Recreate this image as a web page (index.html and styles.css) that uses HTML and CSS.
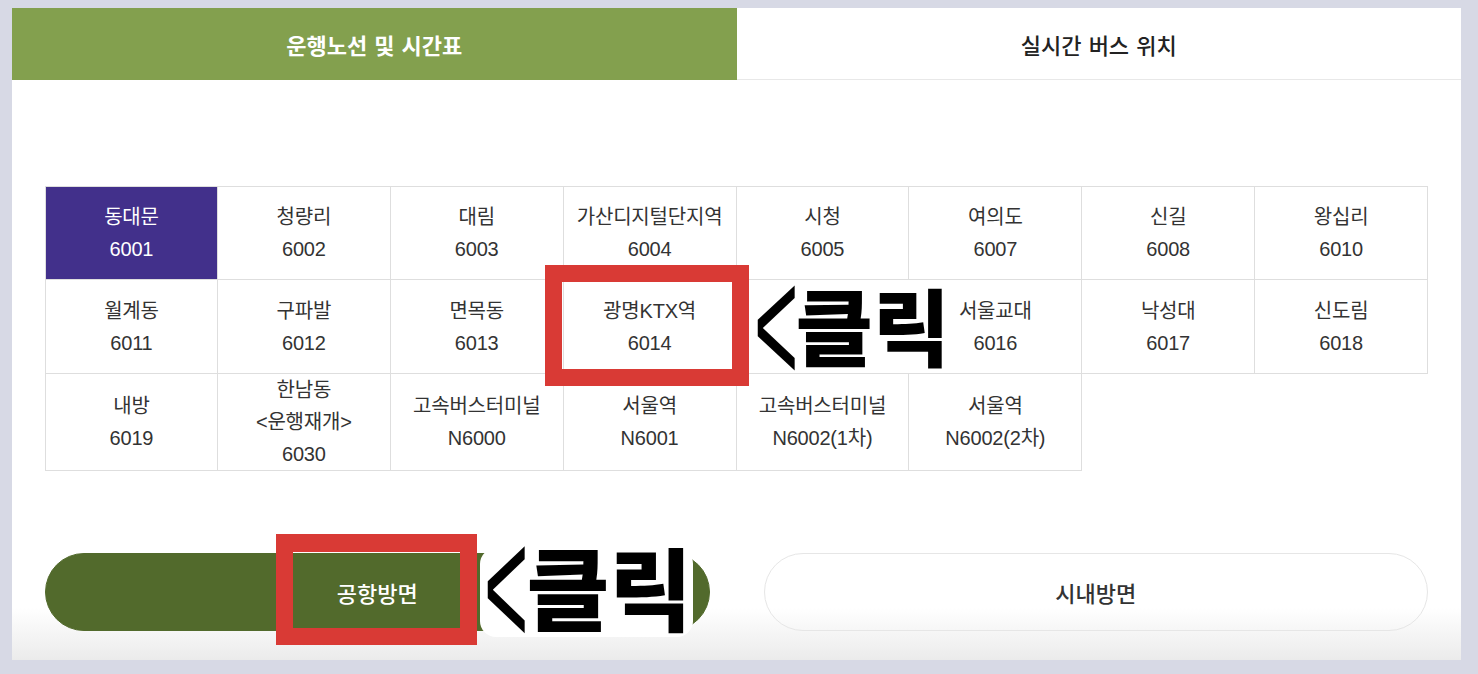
FILE: index.html
```html
<!DOCTYPE html>
<html lang="ko">
<head>
  <meta charset="UTF-8">
  <title>공항버스 운행노선 및 시간표</title>
  <meta name="viewport" content="width=device-width, initial-scale=1.0">
  <link rel="stylesheet" href="styles.css">
</head>
<body>
  <div class="panel">
    <div class="tabs">
      <a class="tab tab-on">운행노선 및 시간표</a>
      <a class="tab">실시간 버스 위치</a>
    </div>

    <div class="content">
      <ul class="routes">
        <li class="route route-on"><span>동대문</span><span>6001</span></li>
        <li class="route"><span>청량리</span><span>6002</span></li>
        <li class="route"><span>대림</span><span>6003</span></li>
        <li class="route"><span>가산디지털단지역</span><span>6004</span></li>
        <li class="route"><span>시청</span><span>6005</span></li>
        <li class="route"><span>여의도</span><span>6007</span></li>
        <li class="route"><span>신길</span><span>6008</span></li>
        <li class="route"><span>왕십리</span><span>6010</span></li>
        <li class="route"><span>월계동</span><span>6011</span></li>
        <li class="route"><span>구파발</span><span>6012</span></li>
        <li class="route"><span>면목동</span><span>6013</span></li>
        <li class="route"><span>광명KTX역</span><span>6014</span></li>
        <li class="route"></li>
        <li class="route"><span>서울교대</span><span>6016</span></li>
        <li class="route"><span>낙성대</span><span>6017</span></li>
        <li class="route"><span>신도림</span><span>6018</span></li>
        <li class="route"><span>내방</span><span>6019</span></li>
        <li class="route"><span>한남동</span><span>&lt;운행재개&gt;</span><span>6030</span></li>
        <li class="route"><span>고속버스터미널</span><span>N6000</span></li>
        <li class="route"><span>서울역</span><span>N6001</span></li>
        <li class="route"><span>고속버스터미널</span><span>N6002(1차)</span></li>
        <li class="route"><span>서울역</span><span>N6002(2차)</span></li>
      </ul>

      <div class="dirs">
        <button class="dir dir-on">공항방면</button>
        <button class="dir">시내방면</button>
      </div>
    </div>

    <!-- 캡처 위에 덧붙인 안내 표시 -->
    <div class="mark mark-route"></div>
    <div class="note note-route"><span class="arrow">&lt;</span><span>클릭</span></div>
    <div class="mark mark-dir"></div>
    <div class="note note-dir"><span class="arrow">&lt;</span><span>클릭</span></div>
  </div>
</body>
</html>
```

FILE: styles.css
```css
body {
  margin: 0;
  background: #d7d9e5;
  font-family: "Liberation Sans", "Noto Sans CJK KR", sans-serif;
  color: #333;
}
.panel {
  position: relative;
  margin: 8px 0 0 12px;
  width: 1449px;
  height: 652px;
  background: linear-gradient(to bottom, #fff 600px, #ebebeb 652px);
}
.tabs {
  display: flex;
  height: 72px;
}
.tab {
  flex: 1 1 0;
  display: flex;
  align-items: center;
  justify-content: center;
  font-size: 22px;
  font-weight: 500;
  word-spacing: 1px;
  color: #222;
  border-bottom: 1px solid #e8e8e8;
}
.tab-on {
  background: #83a04e;
  color: #fff;
  font-weight: 700;
  border-bottom-color: #83a04e;
}
.content {
  padding: 106px 33px 0;
}
.routes {
  list-style: none;
  margin: 0;
  padding: 0;
  display: grid;
  grid-template-columns: repeat(8, 1fr);
  grid-auto-rows: minmax(94px, auto);
}
.route {
  display: flex;
  flex-direction: column;
  align-items: center;
  justify-content: center;
  font-size: 20px;
  line-height: 32px;
  letter-spacing: -0.2px;
  color: #333;
  border-right: 1px solid #dedede;
  border-bottom: 1px solid #dedede;
}
.route:nth-child(-n+8) {
  border-top: 1px solid #dedede;
}
.route:nth-child(8n+1) {
  border-left: 1px solid #dedede;
}
.route-on {
  background: #42308b;
  color: #fff;
}
.dirs {
  display: flex;
  gap: 54px;
  margin-top: 82px;
}
.dir {
  flex: 1 1 0;
  height: 78px;
  border-radius: 39px;
  border: 1px solid #e6e6e6;
  background: transparent;
  font-family: inherit;
  font-size: 22px;
  font-weight: 500;
  color: #333;
}
.dir-on {
  background: #526a2c;
  border-color: #526a2c;
  color: #fff;
}

/* 안내 표시 */
.mark {
  position: absolute;
  box-sizing: border-box;
  border: 17px solid #d93a35;
}
.mark-route {
  left: 533px;
  top: 257px;
  width: 204px;
  height: 121px;
}
.mark-dir {
  left: 264px;
  top: 526px;
  width: 201px;
  height: 111px;
  border-top-width: 18px;
}
.note {
  position: absolute;
  box-sizing: border-box;
  display: flex;
  align-items: center;
  background: #fff;
  color: #000;
  font-family: "Noto Sans CJK KR", sans-serif;
  font-weight: 900;
  line-height: 1;
  white-space: nowrap;
}
.arrow {
  display: inline-block;
  font-family: "Liberation Sans", sans-serif;
  font-weight: 400;
  font-size: 76px;
  line-height: 0.5;
}
.note-route {
  left: 740px;
  top: 272px;
  width: 190px;
  height: 93px;
  padding-bottom: 5px;
  font-size: 84px;
}
.note-route .arrow {
  margin: 0 -3px 0 2px;
  transform: translateY(2px) scaleY(2.2);
}
.note-dir {
  left: 468px;
  top: 540px;
  width: 213px;
  height: 89px;
  padding-bottom: 16px;
  border-radius: 16px;
  font-size: 90px;
}
.note-dir .arrow {
  margin: 0 -2px 0 4px;
  transform: translateY(2px) scaleY(2.25);
}
```
